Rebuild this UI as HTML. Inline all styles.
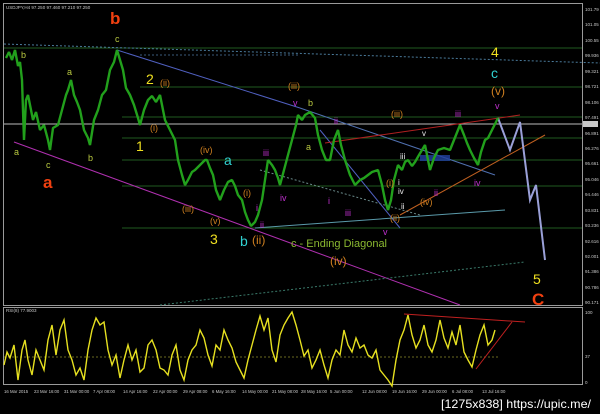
<!DOCTYPE html>
<html><head><meta charset="utf-8"><style>
html,body{margin:0;padding:0;background:#000;width:600px;height:414px;overflow:hidden}
svg{display:block}
text{font-family:"Liberation Sans",sans-serif}
</style></head><body>
<svg width="600" height="414" viewBox="0 0 600 414" xmlns="http://www.w3.org/2000/svg">
<rect width="600" height="414" fill="#000"/>
<rect x="3.5" y="3.5" width="579" height="302" fill="none" stroke="#9a9a9a" stroke-width="1"/>
<rect x="3.5" y="307.5" width="579" height="77" fill="none" stroke="#9a9a9a" stroke-width="1"/>
<g stroke="#1f5a1f" stroke-width="1">
<line x1="4" y1="48" x2="582" y2="48"/>
<line x1="140" y1="87" x2="582" y2="87"/>
<line x1="122" y1="117" x2="582" y2="117"/>
<line x1="122" y1="138" x2="582" y2="138"/>
<line x1="122" y1="160" x2="582" y2="160"/>
<line x1="122" y1="186" x2="582" y2="186"/>
<line x1="122" y1="228" x2="582" y2="228"/>
</g>
<line x1="4" y1="124" x2="582" y2="124" stroke="#bbb" stroke-width="1"/>
<line x1="4" y1="357" x2="500" y2="357" stroke="#6a6a20" stroke-width="1" stroke-dasharray="2,2"/>
<line x1="4" y1="44" x2="600" y2="63" stroke="#4a7a9a" stroke-dasharray="2,2"/>
<line x1="117" y1="50" x2="300" y2="108" stroke="#5060c0"/>
<line x1="14" y1="142" x2="460" y2="305" stroke="#b030b0"/>
<line x1="160" y1="305" x2="525" y2="262" stroke="#3a7a6a" stroke-dasharray="2,2"/>
<line x1="300" y1="108" x2="495" y2="175" stroke="#5070b0"/>
<line x1="320" y1="130" x2="400" y2="228" stroke="#5060c0"/>
<line x1="255" y1="228" x2="505" y2="210" stroke="#5a9aaa"/>
<line x1="325" y1="143" x2="520" y2="115" stroke="#b02020"/>
<line x1="400" y1="215" x2="545" y2="135" stroke="#c06020"/>
<line x1="260" y1="170" x2="420" y2="215" stroke="#6a8a8a" stroke-dasharray="2,2"/>
<line x1="140" y1="55" x2="300" y2="55" stroke="#3a5a7a" stroke-dasharray="2,2"/>
<rect x="420" y="155" width="30" height="6" fill="#2040a0" opacity="0.8"/>
<polyline points="498,118 510,150 520,122 530,200 536,185 545,260" fill="none" stroke="#9aa0d8" stroke-width="2"/>
<polyline fill="none" stroke="#22a01c" stroke-width="2.4" stroke-linejoin="bevel" points="6,58 9,52 12,60 15,50 18,66 20,62 22,80 24,140 26,100 28,95 31,110 33,120 36,112 40,130 44,125 48,140 50,150 53,128 58,125 62,110 66,95 68,90 71,80 74,95 77,102 80,110 84,130 88,138 90,145 94,120 98,110 102,95 106,90 110,70 114,62 117,50 120,60 123,70 126,88 130,95 134,105 138,118 140,125 144,110 148,100 152,96 156,102 160,95 163,110 165,120 170,130 175,140 178,160 182,175 185,185 188,180 192,172 195,170 200,165 205,160 207,160 210,168 213,175 216,190 220,200 224,190 228,182 232,180 235,186 238,195 242,200 245,212 248,220 251,226 255,222 258,215 262,200 265,180 268,160 272,165 275,170 278,178 280,185 284,170 288,155 292,140 296,125 298,115 302,120 305,115 310,112 315,118 318,135 322,150 326,160 330,160 334,140 338,130 341,145 345,160 350,175 355,185 360,180 364,178 368,175 372,172 378,170 382,185 385,200 388,210 391,200 394,180 398,165 402,170 405,162 408,160 412,166 415,162 419,155 422,150 425,145 428,160 430,170 434,158 438,150 444,148 450,150 454,140 458,130 460,125 464,135 467,143 470,150 474,158 478,165 481,152 485,140 488,138 492,130 495,124 498,118"/>
<polyline fill="none" stroke="#e6e020" stroke-width="1.4" points="4,365 7,352 10,358 14,345 18,380 22,350 25,340 28,360 32,375 36,350 40,360 44,370 48,340 52,325 56,355 60,330 64,320 68,350 72,360 76,375 80,368 84,380 88,350 92,330 96,318 100,325 104,322 108,350 112,365 116,355 120,378 124,360 128,345 132,360 136,350 140,372 144,368 148,345 152,340 156,350 160,368 164,370 168,375 172,355 176,345 180,370 184,380 188,360 192,350 196,345 200,330 204,338 208,355 212,366 216,345 220,350 224,330 228,340 232,348 236,362 240,370 244,378 248,360 252,345 256,330 260,316 264,330 268,318 272,350 276,362 280,335 284,325 288,318 292,312 296,325 300,340 304,356 308,350 312,368 316,360 320,350 324,365 328,378 332,360 336,350 340,355 344,330 348,345 352,352 356,338 360,348 364,345 368,355 372,358 376,350 380,370 384,375 388,380 392,386 396,360 400,340 404,330 408,315 412,335 416,348 420,340 424,325 428,345 432,352 436,340 440,320 444,338 448,348 452,332 456,345 460,325 464,352 468,360 472,367 476,350 480,335 484,325 488,345 492,340 495,330"/>
<line x1="404" y1="314" x2="525" y2="322" stroke="#c02020"/>
<line x1="476" y1="369" x2="512" y2="322" stroke="#c02020"/>
<g fill="#c8c8c8" font-size="4.5">
<text x="6" y="9">USDJPY,H4 97.250 97.460 97.210 97.250</text>
<text x="6" y="312">RSI(8) 77.9003</text>
<text x="585" y="11">101.79</text><text x="585" y="26">101.05</text><text x="585" y="42">100.55</text>
<text x="585" y="57">99.936</text><text x="585" y="73">99.321</text><text x="585" y="88">98.721</text>
<text x="585" y="104">98.106</text><text x="585" y="119">97.491</text><text x="585" y="135">96.891</text>
<text x="585" y="150">96.276</text><text x="585" y="165">95.661</text><text x="585" y="181">95.046</text>
<text x="585" y="196">94.446</text><text x="585" y="212">93.831</text><text x="585" y="227">93.236</text>
<text x="585" y="243">92.616</text><text x="585" y="258">92.001</text><text x="585" y="273">91.386</text>
<text x="585" y="289">90.786</text><text x="585" y="304">90.171</text>
<text x="585" y="314">100</text><text x="585" y="358">37</text><text x="585" y="384">0</text>
</g>
<rect x="583" y="121" width="15" height="6" fill="#c8c8c8"/>
<g fill="#c8c8c8" font-size="4.3">
<text x="4" y="393">16 Mar 2015</text><text x="34" y="393">23 Mar 16:00</text><text x="64" y="393">31 Mar 00:00</text>
<text x="93" y="393">7 Apr 08:00</text><text x="123" y="393">14 Apr 16:00</text><text x="153" y="393">22 Apr 00:00</text>
<text x="183" y="393">29 Apr 08:00</text><text x="212" y="393">6 May 16:00</text><text x="242" y="393">14 May 00:00</text>
<text x="272" y="393">21 May 08:00</text><text x="301" y="393">28 May 16:00</text><text x="330" y="393">5 Jun 00:00</text>
<text x="362" y="393">12 Jun 08:00</text><text x="392" y="393">19 Jun 16:00</text><text x="422" y="393">29 Jun 00:00</text>
<text x="452" y="393">6 Jul 08:00</text><text x="482" y="393">13 Jul 16:00</text>
</g>
<g font-size="17" font-weight="bold" fill="#f04010">
<text x="110" y="24">b</text><text x="43" y="188">a</text><text x="532" y="305">C</text>
</g>
<g font-size="9" fill="#b8c840">
<text x="21" y="58">b</text><text x="67" y="75">a</text><text x="115" y="42">c</text>
<text x="14" y="155">a</text><text x="46" y="168">c</text><text x="88" y="161">b</text>
<text x="308" y="106">b</text><text x="306" y="150">a</text>
</g>
<g font-size="14" fill="#f0e020">
<text x="146" y="84">2</text><text x="136" y="151">1</text><text x="210" y="244">3</text>
<text x="491" y="57">4</text><text x="533" y="284">5</text>
</g>
<g font-size="14" fill="#30d0d0"><text x="224" y="165">a</text><text x="240" y="246">b</text><text x="491" y="78">c</text></g>
<g font-size="9" fill="#d08020">
<text x="160" y="86">(ii)</text><text x="150" y="131">(i)</text><text x="200" y="153">(iv)</text>
<text x="182" y="212">(iii)</text><text x="210" y="224">(v)</text><text x="243" y="196">(i)</text>
<text x="288" y="89">(iii)</text><text x="390" y="221">(ii)</text><text x="391" y="117">(iii)</text>
<text x="420" y="205">(iv)</text><text x="386" y="186">(i)</text>
</g>
<g font-size="12" fill="#d08020"><text x="252" y="244">(ii)</text><text x="330" y="265">(iv)</text><text x="491" y="95">(v)</text></g>
<text x="291" y="247" font-size="11" fill="#8ab830">c - Ending Diagonal</text>
<g font-size="9" fill="#c030d0">
<text x="293" y="106">v</text><text x="263" y="156">iii</text><text x="280" y="201">iv</text>
<text x="256" y="211">i</text><text x="260" y="228">ii</text><text x="334" y="124">ii</text>
<text x="328" y="204">i</text><text x="345" y="216">iii</text><text x="383" y="235">v</text>
<text x="455" y="117">iii</text><text x="474" y="186">iv</text><text x="434" y="196">ii</text>
<text x="495" y="109">v</text>
</g>
<g font-size="8" fill="#e8e8e8">
<text x="422" y="136">v</text><text x="400" y="159">iii</text><text x="398" y="194">iv</text>
<text x="398" y="185">i</text><text x="401" y="209">ii</text>
</g>
<text x="441" y="408" font-size="12" fill="#ffffff" font-family="Liberation Sans Narrow,Liberation Sans,sans-serif" textLength="150" lengthAdjust="spacingAndGlyphs">[1275x838] https://upic.me/</text>
</svg>
</body></html>
